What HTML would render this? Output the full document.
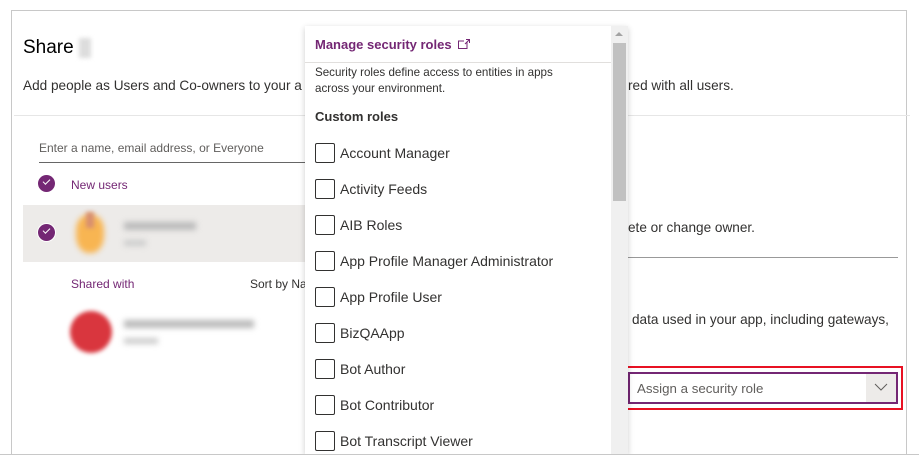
<!DOCTYPE html>
<html><head><meta charset="utf-8"><style>
*{margin:0;padding:0;box-sizing:border-box}
body{width:919px;height:466px;background:#fff;font-family:"Liberation Sans",sans-serif;color:#323130;position:relative;overflow:hidden}
.a{position:absolute;white-space:nowrap}
.outer{left:11px;top:10px;width:896px;height:445px;border:1px solid #c8c8c8}
.chk{width:17px;height:17px;border-radius:50%;background:#742774}
.chk:after{content:"";position:absolute;left:5px;top:4px;width:6px;height:3px;border-left:1.5px solid #fff;border-bottom:1.5px solid #fff;transform:rotate(-45deg)}
.cb{width:20px;height:20px;border:1px solid #323130;border-radius:2px;left:315px}
.rl{left:340px;font-size:14px;color:#323130}
</style></head><body>
<div class="a outer"></div>
<div class="a" style="left:23px;top:37px;font-size:19px;color:#000">Share</div>
<div class="a" style="left:79px;top:38px;width:12px;height:20px;background:#ddd;filter:blur(2px)"></div>
<div class="a" style="left:23px;top:78px;font-size:13.6px">Add people as Users and Co-owners to your a</div>
<div class="a" style="left:628px;top:78px;font-size:13.6px">red with all users.</div>
<div class="a" style="left:14px;top:115px;width:896px;height:1px;background:#e6e6e6"></div>
<div class="a" style="left:39px;top:141px;font-size:12px;color:#605e5c">Enter a name, email address, or Everyone</div>
<div class="a" style="left:39px;top:162px;width:270px;height:1px;background:#666"></div>
<div class="a chk" style="left:38px;top:175px"></div>
<div class="a" style="left:71px;top:178px;font-size:12px;color:#742774">New users</div>
<div class="a" style="left:23px;top:205px;width:285px;height:57px;background:#edebe9"></div>
<div class="a chk" style="left:38px;top:224px;box-shadow:0 0 0 1px #fff"></div>
<div class="a" style="left:76px;top:215px;width:28px;height:38px;border-radius:40% 40% 45% 45%;background:#f8b552;filter:blur(3px)"></div>
<div class="a" style="left:86px;top:212px;width:8px;height:16px;background:#d89070;filter:blur(2px)"></div>
<div class="a" style="left:124px;top:222px;width:72px;height:8px;background:#bbb;filter:blur(3px)"></div>
<div class="a" style="left:124px;top:240px;width:22px;height:6px;background:#ccc;filter:blur(3px)"></div>
<div class="a" style="left:71px;top:277px;font-size:12px;color:#742774">Shared with</div>
<div class="a" style="left:250px;top:277px;font-size:12px">Sort by Na</div>
<div class="a" style="left:70px;top:311px;width:42px;height:42px;border-radius:50%;background:#d9363e;filter:blur(2px)"></div>
<div class="a" style="left:124px;top:320px;width:130px;height:8px;background:#bbb;filter:blur(3px)"></div>
<div class="a" style="left:124px;top:338px;width:34px;height:6px;background:#ccc;filter:blur(3px)"></div>
<div class="a" style="left:628px;top:220px;font-size:13.6px">ete or change owner.</div>
<div class="a" style="left:628px;top:257px;width:270px;height:1px;background:#999"></div>
<div class="a" style="left:632px;top:312px;font-size:13.6px">data used in your app, including gateways,</div>
<div class="a" style="left:623px;top:366px;width:280px;height:44px;border:2px solid #e81123"></div>
<div class="a" style="left:628px;top:372px;width:270px;height:32px;border:2px solid #742774;background:#fff"></div>
<div class="a" style="left:866px;top:374px;width:30px;height:28px;background:#edebe9"></div>
<svg class="a" style="left:874px;top:382px" width="14" height="10"><path d="M1 2 L7 8 L13 2" fill="none" stroke="#605e5c" stroke-width="1"/></svg>
<div class="a" style="left:637px;top:381px;font-size:13.3px;color:#605e5c">Assign a security role</div>
<!-- popup -->
<div class="a" style="left:305px;top:26px;width:323px;height:428px;background:#fff;box-shadow:0 2px 6px rgba(0,0,0,.2)"></div>
<div class="a" style="left:611px;top:26px;width:17px;height:428px;background:#f0f0f0"></div>
<div class="a" style="left:613px;top:43px;width:13px;height:158px;background:#c1c1c1"></div>
<svg class="a" style="left:614px;top:31px" width="10" height="6"><path d="M1 5 L5 1 L9 5Z" fill="#a3a3a3"/></svg>
<div class="a" style="left:315px;top:37px;font-size:13px;color:#742774;font-weight:bold">Manage security roles</div>
<svg class="a" style="left:457px;top:38px" width="14" height="12"><path d="M10 4 V10.5 H1.5 V3 H7 M9 1.5 H12.5 V5 M12.5 1.5 L8 6" fill="none" stroke="#742774" stroke-width="1"/></svg>
<div class="a" style="left:305px;top:62px;width:306px;height:1px;background:#e1dfdd"></div>
<div class="a" style="left:315px;top:65px;font-size:11.6px;line-height:16px">Security roles define access to entities in apps<br>across your environment.</div>
<div class="a" style="left:315px;top:109px;font-size:13px;font-weight:bold">Custom roles</div>
<div class="a cb" style="top:143px"></div><div class="a rl" style="top:145px">Account Manager</div>
<div class="a cb" style="top:179px"></div><div class="a rl" style="top:181px">Activity Feeds</div>
<div class="a cb" style="top:215px"></div><div class="a rl" style="top:217px">AIB Roles</div>
<div class="a cb" style="top:251px"></div><div class="a rl" style="top:253px">App Profile Manager Administrator</div>
<div class="a cb" style="top:287px"></div><div class="a rl" style="top:289px">App Profile User</div>
<div class="a cb" style="top:323px"></div><div class="a rl" style="top:325px">BizQAApp</div>
<div class="a cb" style="top:359px"></div><div class="a rl" style="top:361px">Bot Author</div>
<div class="a cb" style="top:395px"></div><div class="a rl" style="top:397px">Bot Contributor</div>
<div class="a cb" style="top:431px"></div><div class="a rl" style="top:433px">Bot Transcript Viewer</div>
<div class="a" style="left:0;top:454px;width:919px;height:12px;background:#fff;border-top:1px solid #c8c8c8"></div>
</body></html>
